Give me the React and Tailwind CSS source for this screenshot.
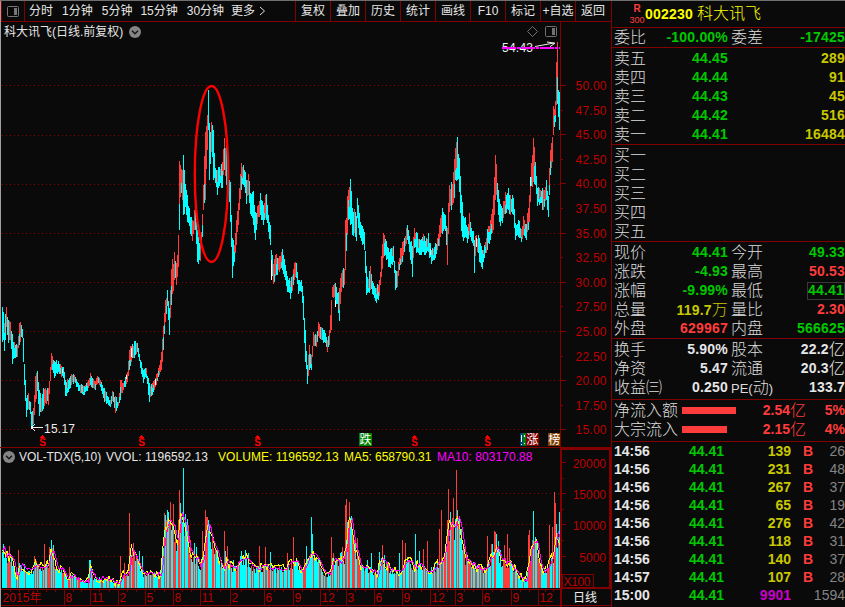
const RED = '#ff3c3c';
const CYAN = '#00ffff';
const LINE = '#820000';
const AXIS = '#be0000';

// x, high, low
const PRICE = [
  [2,307,342],[4,323,351],[6,307,327],[8,320,343],[10,322,340],[12,334,364],[14,342,358],[17,345,357],[19,323,345],[21,325,337],[22,329,338],[23,338,362],[24,364,385],[26,398,417],[28,393,409],[30,402,414],[31,412,428],[33,408,424],[35,376,402],[37,371,391],[39,390,416],[41,398,412],[43,388,409],[46,390,404],[48,388,405],[50,367,381],[51,353,370],[54,361,378],[58,361,372],[61,366,377],[63,367,378],[65,380,396],[68,380,392],[71,374,385],[74,375,382],[78,383,391],[83,386,395],[87,382,391],[90,373,385],[95,381,390],[97,376,384],[100,380,387],[104,388,402],[107,396,403],[110,400,407],[112,391,401],[115,396,413],[118,402,406],[120,380,400],[123,383,390],[127,372,382],[129,350,370],[131,346,362],[134,341,358],[137,343,352],[140,360,368],[143,370,383],[146,368,378],[149,383,402],[152,383,395],[156,374,385],[159,365,375],[161,352,370],[163,326,350],[165,300,322],[167,290,306],[169,308,335],[170,290,318],[171,269,305],[174,252,280],[176,263,285],[178,235,267],[179,161,230],[180,165,197],[182,170,200],[183,155,215],[185,184,207],[187,195,222],[190,217,234],[192,220,241],[195,209,230],[197,230,262],[200,242,261],[202,214,237],[203,185,210],[205,132,200],[207,115,150],[208,90,130],[209,123,180],[211,122,152],[213,130,180],[215,168,183],[217,170,195],[219,167,186],[222,162,188],[224,138,170],[226,145,185],[228,168,192],[230,182,222],[232,238,278],[234,245,262],[236,220,245],[238,203,225],[241,163,190],[243,165,185],[246,180,204],[248,174,195],[250,193,214],[253,191,225],[255,212,240],[258,205,217],[260,193,215],[263,205,225],[266,194,220],[268,215,232],[270,225,245],[271,250,275],[273,264,284],[276,254,275],[279,256,272],[282,249,270],[285,265,280],[287,276,292],[290,281,299],[294,263,280],[296,263,278],[298,280,294],[301,280,292],[303,296,320],[305,330,362],[307,365,384],[309,345,370],[311,355,370],[313,332,346],[316,335,347],[318,322,336],[321,327,340],[324,330,342],[327,340,352],[329,330,345],[331,300,330],[332,287,297],[335,283,302],[337,293,304],[339,288,321],[341,273,292],[344,269,285],[345,220,270],[347,196,235],[348,190,220],[350,179,225],[352,208,235],[354,209,233],[356,216,241],[357,198,218],[359,213,235],[362,226,245],[364,232,250],[366,266,295],[368,279,292],[370,266,290],[373,283,295],[376,288,303],[379,280,296],[381,256,277],[383,233,258],[385,239,255],[388,248,267],[390,249,268],[393,246,262],[395,270,290],[397,271,287],[400,248,265],[402,242,262],[404,238,252],[407,225,240],[409,236,252],[412,246,277],[414,228,248],[417,233,252],[420,240,255],[423,234,252],[425,241,255],[428,233,252],[431,250,264],[434,247,260],[437,238,250],[439,225,246],[442,208,234],[445,215,231],[447,228,265],[449,185,212],[452,184,205],[454,159,198],[455,148,180],[457,137,180],[459,158,192],[461,195,231],[463,216,241],[465,217,237],[467,227,243],[469,213,235],[471,228,241],[473,231,246],[474,240,273],[476,235,247],[479,238,262],[482,250,269],[484,245,258],[487,229,250],[490,220,240],[493,195,230],[495,155,200],[496,164,195],[498,190,215],[500,204,226],[502,208,223],[505,192,214],[508,188,210],[510,195,215],[513,198,215],[515,223,240],[518,220,237],[521,229,242],[523,216,235],[526,224,240],[529,195,222],[531,163,186],[533,138,182],[535,162,185],[537,188,206],[540,190,203],[543,190,210],[546,180,200],[548,196,217],[549,168,195],[550,150,175],[552,137,162],[553,106,135],[555,101,122],[556,62,105],[557,42,104],[558,90,117],[559,92,130],[560,80,139],
];

// x, moving average height position
const MA = [[2,548],[5,555],[10,557],[13,562],[15,573],[17,575],[20,565],[25,570],[32,570],[35,563],[38,567],[45,565],[48,562],[50,552],[52,552],[56,567],[62,570],[67,578],[72,575],[80,581],[87,582],[90,568],[93,577],[97,578],[108,580],[118,583],[122,575],[128,572],[131,547],[134,555],[139,565],[142,574],[150,573],[160,575],[164,535],[168,518],[172,524],[177,543],[180,512],[184,522],[190,552],[196,558],[200,568],[203,555],[207,522],[212,540],[218,558],[223,568],[226,560],[229,565],[235,567],[240,560],[245,557],[250,565],[256,568],[265,566],[275,568],[283,569],[290,563],[296,561],[300,570],[305,567],[309,555],[313,555],[318,560],[325,575],[329,573],[333,557],[340,562],[345,555],[347,530],[350,518],[354,545],[360,565],[370,569],[376,575],[381,560],[384,562],[390,570],[400,572],[405,562],[409,560],[414,568],[419,562],[425,571],[432,571],[438,562],[443,559],[447,535],[450,520],[454,530],[457,515],[460,528],[465,557],[475,567],[485,570],[488,562],[493,555],[496,545],[500,560],[508,562],[515,570],[519,577],[525,580],[528,565],[532,545],[536,543],[540,565],[544,572],[548,565],[553,555],[556,530],[558,540],[560,548]];

const SPIKES = {
  r: [[9,546],[18,550],[34,556],[44,544],[49,547],[69,567],[120,556],[124,563],[129,513],[133,543],[136,556],[164,513],[166,520],[170,502],[173,504],[175,525],[178,520],[179,490],[181,513],[190,540],[202,531],[205,510],[206,517],[224,531],[227,546],[259,546],[265,547],[287,553],[293,537],[331,537],[342,547],[345,505],[346,499],[349,502],[357,538],[382,545],[402,540],[405,543],[423,549],[427,541],[439,529],[441,510],[447,520],[448,489],[452,518],[453,498],[456,470],[458,521],[487,536],[491,544],[494,531],[495,532],[504,545],[507,534],[509,548],[528,535],[529,530],[549,525],[552,527],[554,492],[555,503]],
  c: [[2,552],[51,540],[53,545],[89,560],[139,551],[142,556],[165,515],[167,510],[168,512],[183,468],[185,514],[187,519],[196,547],[208,520],[209,526],[241,551],[245,550],[270,552],[306,546],[311,517],[312,534],[350,518],[351,516],[371,553],[379,552],[399,553],[415,534],[419,551],[450,512],[457,510],[459,517],[496,534],[498,541],[533,511],[535,537],[559,512]],
};

function noise(n) {
  const v = Math.sin(n * 127.1 + 11.7) * 43758.5453;
  return v - Math.floor(v);
}

function sample(points, x, k) {
  for (let i = 1; i < points.length; i++) {
    if (x <= points[i][0]) {
      const a = points[i - 1];
      const b = points[i];
      const t = (x - a[0]) / (b[0] - a[0]);
      return a[k] + (b[k] - a[k]) * t;
    }
  }
  return points[points.length - 1][k];
}

function buildCandles() {
  const out = { r: '', c: '' };
  const known = new Set(PRICE.map((p) => p[0]));
  for (let x = 2; x <= 560; x++) {
    let hi = sample(PRICE, x, 1);
    let lo = sample(PRICE, x, 2);
    if (!known.has(x)) {
      hi += (noise(x) - 0.35) * (lo - hi) * 0.35;
      lo -= (noise(x + 700) - 0.35) * (lo - hi) * 0.35;
    }
    const before = sample(PRICE, Math.max(2, x - 2), 1) + sample(PRICE, Math.max(2, x - 2), 2);
    const after = sample(PRICE, Math.min(560, x + 1), 1) + sample(PRICE, Math.min(560, x + 1), 2);
    const up = (before - after) / 24 + (noise(x + 300) - 0.6) * 2 > 0;
    out[up ? 'r' : 'c'] += `M${x} ${Math.round(hi)}h1V${Math.round(lo)}h-1z`;
    const mid = Math.round(hi + (lo - hi) * (0.3 + noise(x + 50) * 0.4));
    if (noise(x + 90) > 0.66) {
      out[up ? 'c' : 'r'] += `M${x} ${mid}h1V${Math.round(lo)}h-1z`;
    }
  }
  return out;
}

function buildVolume() {
  const out = { r: '', c: '' };
  const spike = {};
  for (const k of ['r', 'c']) for (const [x, y] of SPIKES[k]) spike[x] = [y, k];
  for (let x = 2; x <= 559; x++) {
    const h = 588 - sample(MA, x, 1);
    let top = Math.round(588 - h * (0.74 + noise(x + 13) * 0.4));
    let key = noise(x + 41) > 0.68 ? 'r' : 'c';
    if (spike[x]) [top, key] = spike[x];
    else if (noise(x + 5) > 0.93 && h < 50) top -= Math.round(h * 0.3);
    out[key] += `M${x} ${top}h1V588h-1z`;
  }
  return out;
}

function average(lag, wobble) {
  let d = '';
  for (let x = 2; x <= 559; x++) {
    const at = Math.max(2, x - lag);
    const base = sample(MA, at, 1);
    const y = base + (noise(Math.floor(x / 2) + lag * 91) - 0.5) * wobble;
    d += `${x === 2 ? 'M' : 'L'}${x + 0.5} ${y.toFixed(1)}`;
  }
  return d;
}

const candles = buildCandles();
const volume = buildVolume();
const ma5 = average(0, 9);
const ma10 = average(1.6, 4);

const SANS = '"Liberation Sans","Noto Sans CJK SC",sans-serif';
const GRID = [85, 135, 184, 233, 282, 331, 380, 429];
const LABELS = ['50.00','47.50','45.00','42.50','40.00','37.50','35.00','32.50','30.00','27.50','25.00','22.50','20.00','17.50','15.00'];
const MONTHS = [[64,'8'],[90,'11'],[118,'2'],[145,'5'],[173,'8'],[200,'11'],[230,'2'],[264,'6'],[293,'9'],[320,'12'],[346,'3'],[374,'6'],[402,'9'],[430,'12'],[455,'3'],[482,'6'],[511,'9'],[538,'12']];

function PriceChart() {
  return (
    <svg className="block shrink-0" width="611" height="425" viewBox="0 22 611 425" shapeRendering="crispEdges" fontFamily={SANS} fontSize="12">
      {GRID.map((y) => (
        <line key={y} x1="2" x2="560" y1={y + 0.5} y2={y + 0.5} stroke="#900000" strokeDasharray="1 3" />
      ))}
      <path d={candles.r} fill={RED} />
      <path d={candles.c} fill={CYAN} />
      <path d="M62 369h1v4h-1zM131 348h1v9h-1zM126 375h1v4h-1zM155 379h1v6h-1zM271 260h1v20h-1zM335 300h1v7h-1zM430 249h1v6h-1zM476 238h1v9h-1zM530 177h1v9h-1z" fill="#fff" />
      <path d="M560.5 22V447" stroke={LINE} />
      {LABELS.map((t, i) => {
        const y = 85.5 + i * 24.6;
        return (
          <g key={t}>
            <line x1="561" x2={i % 2 ? 563 : 566} y1={Math.floor(y) + 0.5} y2={Math.floor(y) + 0.5} stroke={LINE} />
            <text x="575.5" y={y + 4.5} fill={AXIS} textLength="31">{t}</text>
          </g>
        );
      })}
      <ellipse cx="211.5" cy="174" rx="16.7" ry="88" fill="none" stroke="#f00" strokeWidth="2.4" shapeRendering="auto" />
      <g fill="none" stroke="#eee">
        <path d="M31 427.5H43M31 427.5l4 -3M31 427.5l4 3" />
        <path d="M535 46.5L554 43M547 42l8 1.2l-5 3.5" shapeRendering="auto" />
      </g>
      <text x="44" y="433" fill="#eee" textLength="31">15.17</text>
      <text x="502" y="52" fill="#eee" textLength="31">54.43</text>
      <path d="M502 48H560" stroke="#f0f" strokeWidth="2" strokeDasharray="14 1 3 1" />
      <g fill="none" stroke="#707070" shapeRendering="auto">
        <path d="M532.5 26.5l5 5l-5 5l-5 -5z" />
        <rect x="545.5" y="26.5" width="11" height="10" rx="1" />
        <path d="M552 28h3v7h-3z" fill="#707070" stroke="none" />
      </g>
      {[42.5, 141.5, 257.5, 414.5, 487.5].map((x) => (
        <g key={x} fill="#f00">
          <path d={`M${x - 2.5} 437.5l2.5 -2.5l2.5 2.5z`} />
          <text x={x} y="446" fontSize="10" fontWeight="bold" textAnchor="middle">S</text>
        </g>
      ))}
      <path d="M359 433h13v13h-13z" fill="#008000" />
      <path d="M520 433h3v13h-3z" fill="#004080" />
      <path d="M523 433h3v13h-3z" fill="#008000" />
      <path d="M526 433h13v13h-13z" fill="#800000" />
      <path d="M548 433h12v13h-12z" fill="#804000" />
      <path d="M521.5 435v7M524.5 435v2M521 444h1M524 443h1" stroke="#fff" />
      <g fill="#fff" fontSize="12">
        <text x="359.5" y="444">跌</text>
        <text x="526.5" y="444">涨</text>
        <text x="548.3" y="444">榜</text>
      </g>
    </svg>
  );
}

function VolumeChart() {
  return (
    <svg className="block shrink-0 overflow-visible" width="611" height="142" viewBox="0 465 611 142" shapeRendering="crispEdges" fontFamily={SANS} fontSize="12">
      {[493, 524, 556].map((y) => (
        <line key={y} x1="2" x2="560" y1={y + 0.5} y2={y + 0.5} stroke="#900000" strokeDasharray="1 3" />
      ))}
      <path d={volume.r} fill={RED} />
      <path d={volume.c} fill={CYAN} />
      <path d={ma5} fill="none" stroke="#ff0" />
      <path d={ma10} fill="none" stroke="#f0f" />
      <path d="M610 449H561V607M610 448V588M561 588H611" stroke={LINE} strokeWidth="2" fill="none" />
      {[['20000', 462], ['15000', 493], ['10000', 524], ['5000', 556]].map(([t, y]) => (
        <g key={t}>
          <line x1="562" x2="566" y1={y + 0.5} y2={y + 0.5} stroke={LINE} />
          <text x="606" y={y + 5.5} textAnchor="end" fill={AXIS}>{t}</text>
        </g>
      ))}
      <path d="M562 478.5h2M562 509.5h2M562 540.5h2" stroke={LINE} />
      <rect x="562.5" y="574.5" width="31" height="13" fill="none" stroke={LINE} />
      <text x="563.5" y="585.5" fill={AXIS} textLength="27">X100</text>
      <path d="M1 589.5H561M1 605.5H611" stroke={LINE} />
      {MONTHS.map(([x, t], i) => {
        const next = i < MONTHS.length - 1 ? MONTHS[i + 1][0] : 560;
        const step = (next - x) / 3;
        return (
          <g key={x}>
            <path d={`M${x + 0.5} 590V605M${Math.round(x + step) + 0.5} 590v2M${Math.round(x + 2 * step) + 0.5} 590v2`} stroke={LINE} />
            <text x={x + 1.5} y="602" fill={AXIS}>{t}</text>
          </g>
        );
      })}
      <path d="M10.5 590v2M19.5 590v2M28.5 590v2M37.5 590v2M46.5 590v2M55.5 590v2" stroke={LINE} />
      <text x="2.5" y="602" fill={AXIS} textLength="39">2015年</text>
      <text x="573" y="601.5" fill="#eee">日线</text>
    </svg>
  );
}

function Chevron() {
  return (
    <svg width="12" height="12" viewBox="0 0 12 12" className="shrink-0">
      <circle cx="6" cy="6" r="6" fill="#858585" />
      <path d="M3 4.8l3 3l3 -3" fill="none" stroke="#181818" strokeWidth="1.5" />
    </svg>
  );
}

const G = 'text-[#00c800]';
const Y = 'text-[#c8c800]';
const R = 'text-[#ff3c3c]';
const W = 'text-[#e6e6e6]';

function Quote({ a, av, ac, b, bv, bc, boxed }) {
  return (
    <div className="flex h-[19px] items-center whitespace-nowrap pl-0.5 leading-[19px]">
      <span className="w-12 overflow-visible text-[16px] font-light text-[#dcdcdc]">{a}</span>
      <span className={`w-[66px] text-right text-[14px] font-bold tracking-[0.2px] ${ac || ''}`}>{av}</span>
      <span className="ml-[3px] w-12 overflow-visible text-[16px] font-light text-[#dcdcdc]">{b}</span>
      <span className={`flex h-[17px] flex-1 items-center justify-end text-[14px] font-bold tracking-[0.2px] ${bc || ''}`}>
        {boxed ? <span className="flex h-[18px] w-[38px] items-center justify-end border border-[#383838]">{bv}</span> : bv}
      </span>
    </div>
  );
}

function Thin({ children }) {
  return <span className="text-[16px] font-light">{children}</span>;
}

const TICKS = [
  ['14:56', '139', '26'], ['14:56', '231', '48'], ['14:56', '267', '37'], ['14:56', '65', '19'], ['14:56', '276', '42'],
  ['14:56', '118', '31'], ['14:56', '140', '37'], ['14:57', '107', '28'], ['15:00', '9901', '1594'],
];

function Flow({ name, bar, value, pct }) {
  return (
    <div className="flex h-[19px] items-center whitespace-nowrap pl-0.5 leading-[19px]">
      <span className="w-[68px] text-[16px] font-light text-[#dcdcdc]">{name}</span>
      <span className="flex w-14"><span className="h-[7px] bg-[#ff3c3c]" style={{ width: bar }} /></span>
      <span className={`flex w-[68px] items-center justify-end text-[14px] font-bold ${R}`}>{value}<Thin>亿</Thin></span>
      <span className={`flex-1 text-right text-[14px] font-bold ${R}`}>{pct}</span>
    </div>
  );
}

function QuotePanel() {
  return (
    <aside className="flex w-[234px] flex-col border-l border-[#820000]">
      <div className="flex h-[27px] items-center border-b border-[#820000] pl-[17px]">
        <div className={`flex w-4 flex-col items-center ${R}`}>
          <b className="text-[10px] leading-[12px]">R</b>
          <span className="text-[9px] leading-[11px]">300</span>
        </div>
        <b className="text-[14px] tracking-[0.2px] text-[#ffff00]">002230</b>
        <span className="ml-1 text-[16px] font-light text-[#ffff00]">科大讯飞</span>
      </div>
      <div className="border-b border-[#820000]">
        <Quote a="委比" av="-100.00%" ac={G} b="委差" bv="-17425" bc={G} />
      </div>
      <div className="h-[97px] border-b border-[#820000] pt-px">
        <Quote a="卖五" av="44.45" ac={G} bv="289" bc={Y} />
        <Quote a="卖四" av="44.44" ac={G} bv="91" bc={Y} />
        <Quote a="卖三" av="44.43" ac={G} bv="45" bc={Y} />
        <Quote a="卖二" av="44.42" ac={G} bv="516" bc={Y} />
        <Quote a="卖一" av="44.41" ac={G} bv="16484" bc={Y} />
      </div>
      <div className="h-[97px] border-b border-[#820000] pt-px">
        {['买一', '买二', '买三', '买四', '买五'].map((t) => <Quote key={t} a={t} />)}
      </div>
      <div className="h-[97px] border-b border-[#820000] pt-px">
        <Quote a="现价" av="44.41" ac={G} b="今开" bv="49.33" bc={G} />
        <Quote a="涨跌" av="-4.93" ac={G} b="最高" bv="50.53" bc={R} />
        <Quote a="涨幅" av="-9.99%" ac={G} b="最低" bv="44.41" bc={G} boxed />
        <Quote a="总量" av={<>119.7<Thin>万</Thin></>} ac={Y} b="量比" bv="2.30" bc={R} />
        <Quote a="外盘" av="629967" ac={R} b="内盘" bv="566625" bc={G} />
      </div>
      <div className="h-[61px] border-b border-[#820000] pt-px">
        <Quote a="换手" av="5.90%" ac={W} b="股本" bv={<>22.2<Thin>亿</Thin></>} bc={W} />
        <Quote a="净资" av="5.47" ac={W} b="流通" bv={<>20.3<Thin>亿</Thin></>} bc={W} />
        <Quote a="收益㈢" av="0.250" ac={W} b={<><b className="text-[13px]">PE(</b>动<b className="text-[13px]">)</b></>} bv="133.7" bc={W} />
      </div>
      <div className="h-[42px] border-b border-[#820000] pt-px">
        <Flow name="净流入额" bar={54} value="2.54" pct="5%" />
        <Flow name="大宗流入" bar={45} value="2.15" pct="4%" />
      </div>
      {TICKS.map(([time, vol, count], i) => (
        <div key={i} className="flex h-[18px] items-center pl-0.5 text-[14px] font-bold leading-[18px]">
          <span className={`w-10 shrink-0 ${W}`}>{time}</span>
          <span className={`w-[70px] shrink-0 text-right ${G}`}>44.41</span>
          <span className={`w-[67px] shrink-0 text-right ${i === 8 ? 'text-[#c800c8]' : Y}`}>{vol}</span>
          <span className={`ml-3 w-2.5 shrink-0 ${R}`}>{i === 8 ? '' : 'B'}</span>
          <span className="flex-1 text-right font-normal text-[#848484]">{count}</span>
        </div>
      ))}
    </aside>
  );
}

export default function App() {
  return (
    <div className="h-[607px] w-[845px] overflow-hidden border-t border-[#707070] bg-[#0a0a0a] font-['Liberation_Sans','Noto_Sans_CJK_SC',sans-serif] text-[12px] text-[#e6e6e6]">
      <div className="flex h-[606px]">
        <main className="flex w-[611px] flex-col border-l border-[#a0a0a0]">
          <nav className="flex h-[21px] shrink-0 items-stretch whitespace-nowrap border-b border-[#820000] leading-[21px]">
            <div className="flex w-6 items-center justify-center border-x border-[#820000]">
              <svg width="12" height="11" viewBox="0 0 12 11">
                <rect x="0.5" y="0.5" width="11" height="10" rx="1" fill="none" stroke="#777" />
                <path d="M7 2h3v7H7z" fill="#777" />
              </svg>
            </div>
            <div className="flex w-[270px] gap-2.5 pl-1">
              <span>分时</span><span className="-ml-px">1分钟</span><span className="-ml-px">5分钟</span><span className="-ml-0.5">15分钟</span><span className="-ml-px">30分钟</span>
              <span className="-ml-[3px] flex items-center">更多
                <svg className="ml-1" width="7" height="10" viewBox="0 0 7 10"><path d="M1 1l4.5 4L1 9" fill="none" stroke="#ddd" /></svg>
              </span>
            </div>
            {['复权', '叠加', '历史', '统计', '画线', 'F10', '标记', '+自选', '返回'].map((t) => (
              <div key={t} className="flex w-[35px] shrink-0 justify-center border-l border-[#820000]">{t}</div>
            ))}
          </nav>
          <div className="relative -ml-px h-[425px] shrink-0">
            <PriceChart />
            <div className="absolute left-1 top-0.5 flex items-center gap-1.5 leading-4">科大讯飞(日线.前复权)<Chevron /></div>
          </div>
          <div className="-ml-px flex h-[18px] shrink-0 items-center whitespace-nowrap border-t border-[#820000] pl-[3px] leading-4">
            <Chevron />
            <span className="ml-1 w-[87px] tracking-[-0.1px]">VOL-TDX(5,10)</span>
            <span className="w-28 tracking-[0.05px]">VVOL: 1196592.13</span>
            <span className="w-[126px] tracking-[0.05px] text-[#ffff00]">VOLUME: 1196592.13</span>
            <span className="w-[93px] tracking-[-0.05px] text-[#ffff00]">MA5: 658790.31</span>
            <span className="tracking-[0.05px] text-[#ff00ff]">MA10: 803170.88</span>
          </div>
          <div className="-ml-px"><VolumeChart /></div>
        </main>
        <QuotePanel />
      </div>
    </div>
  );
}
